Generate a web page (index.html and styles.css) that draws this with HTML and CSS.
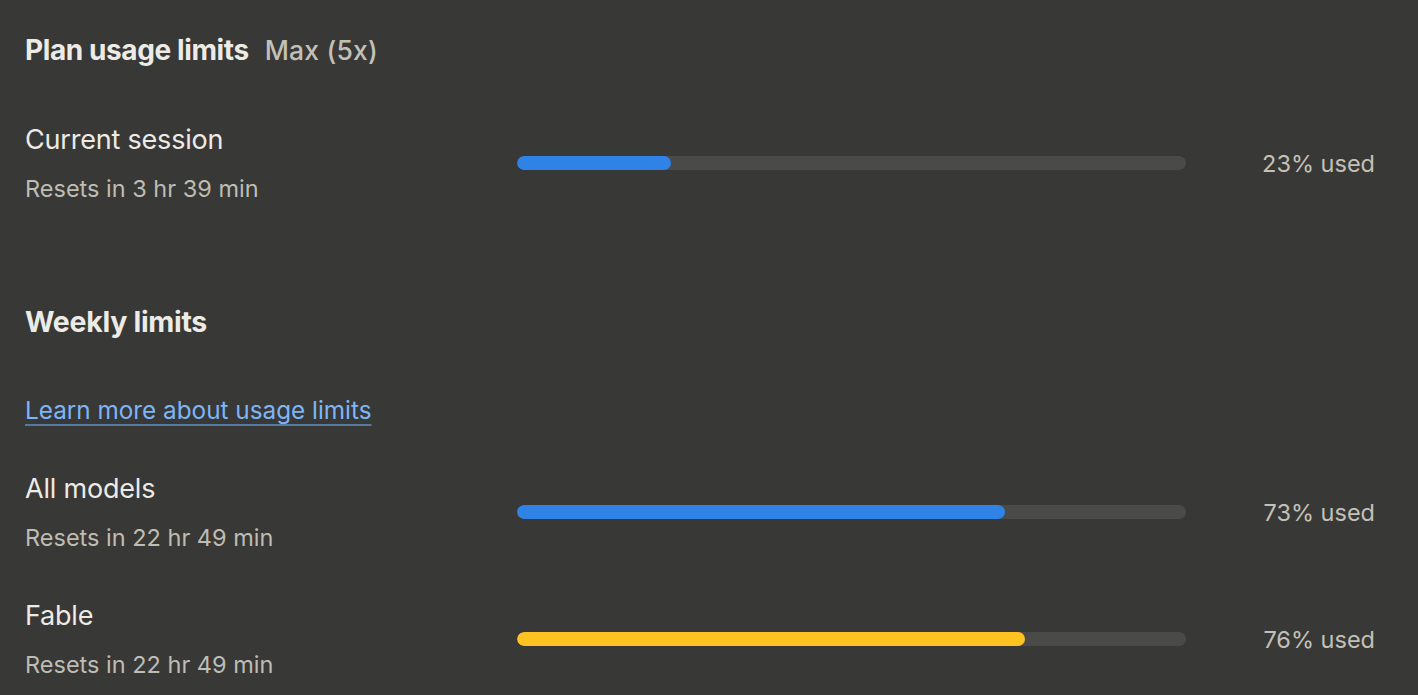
FILE: index.html
```html
<!DOCTYPE html>
<html lang="en">
<head>
    <meta charset="UTF-8">
    <meta name="viewport" content="width=device-width, initial-scale=1.0">
    <title>Usage</title>
    <link rel="stylesheet" href="styles.css">
</head>
<body>
    <div class="usage-page">
        <div class="plan-header">
            <h1>Plan usage limits</h1>
            <span class="plan-name">Max (5x)</span>
        </div>

        <div class="usage-row session-row">
            <div class="usage-info">
                <div class="usage-label">Current session</div>
                <div class="usage-reset">Resets in 3 hr 39 min</div>
            </div>
            <div class="bar-track">
                <div class="bar-fill blue" style="width: 23%"></div>
            </div>
            <div class="usage-percent">23% used</div>
        </div>

        <h2 class="section-title">Weekly limits</h2>

        <a href="#" class="learn-link">Learn more about usage limits</a>

        <div class="usage-row models-row">
            <div class="usage-info">
                <div class="usage-label">All models</div>
                <div class="usage-reset">Resets in 22 hr 49 min</div>
            </div>
            <div class="bar-track">
                <div class="bar-fill blue" style="width: 73%"></div>
            </div>
            <div class="usage-percent">73% used</div>
        </div>

        <div class="usage-row fable-row">
            <div class="usage-info">
                <div class="usage-label">Fable</div>
                <div class="usage-reset">Resets in 22 hr 49 min</div>
            </div>
            <div class="bar-track">
                <div class="bar-fill yellow" style="width: 76%"></div>
            </div>
            <div class="usage-percent">76% used</div>
        </div>
    </div>
</body>
</html>
```

FILE: styles.css
```css
* {
    margin: 0;
    padding: 0;
    box-sizing: border-box;
}

body {
    font-family: Inter, 'Noto Sans', sans-serif;
    background: #383836;
    color: #ecebe6;
    min-height: 100vh;
    overflow: hidden;
}

.usage-page {
    padding: 32px 43px 0 25px;
}

.plan-header {
    display: flex;
    align-items: baseline;
    gap: 16px;
    height: 36px;
}

.plan-header h1 {
    font-size: 28px;
    line-height: 36px;
    font-weight: 700;
    color: #ecebe6;
    letter-spacing: -0.4px;
}

.plan-name {
    font-size: 26.5px;
    line-height: 36px;
    font-weight: 500;
    color: #c3c1b7;
    letter-spacing: 0.2px;
}

.usage-row {
    display: grid;
    grid-template-columns: 492px 669px 1fr;
    align-items: center;
}

.session-row {
    margin-top: 56px;
}

.models-row {
    margin-top: 48px;
}

.fable-row {
    margin-top: 47px;
}

.usage-label {
    font-size: 27px;
    line-height: 32px;
    color: #ecebe6;
    letter-spacing: -0.2px;
}

.usage-reset {
    margin-top: 18px;
    font-size: 23.5px;
    line-height: 30px;
    color: #bfbdb3;
}

.bar-track {
    height: 14px;
    border-radius: 7px;
    background: #4a4a48;
    overflow: hidden;
    margin-top: -2px;
}

.bar-fill {
    height: 100%;
    border-radius: 7px;
}

.bar-fill.blue {
    background: #2f82e6;
}

.bar-fill.yellow {
    background: #fec321;
}

.usage-percent {
    text-align: right;
    font-size: 23.5px;
    line-height: 30px;
    color: #c3c1b7;
    margin-top: 0;
}

.section-title {
    margin-top: 100px;
    font-size: 28.5px;
    line-height: 36px;
    font-weight: 700;
    color: #ecebe6;
    letter-spacing: -0.3px;
}

.learn-link {
    display: inline-block;
    margin-top: 55px;
    font-size: 24.3px;
    line-height: 30px;
    color: #7db6f6;
    text-decoration: underline;
    text-decoration-color: #56799f;
    text-decoration-thickness: 2px;
    text-underline-offset: 5px;
}
```
